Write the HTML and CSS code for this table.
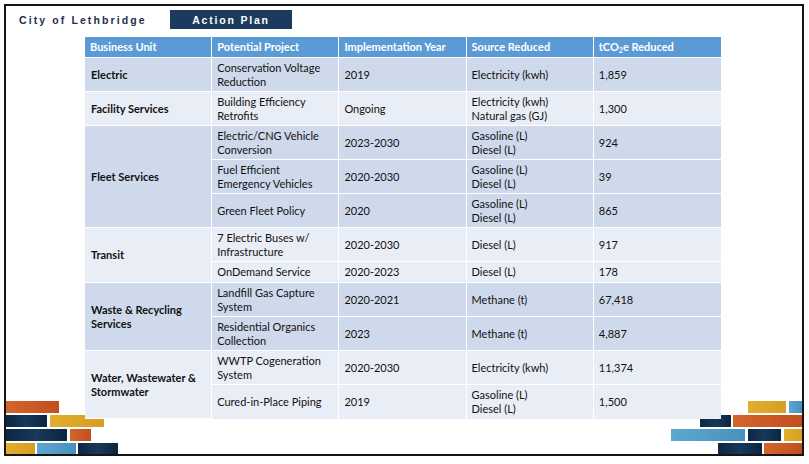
FILE: index.html
```html
<!DOCTYPE html>
<html lang="en">
<head>
<meta charset="utf-8">
<title>City of Lethbridge - Action Plan</title>
<link rel="stylesheet" href="styles.css">
</head>
<body>
<div class="slide">
  <svg class="deco deco-left" width="115" height="54" viewBox="0 0 115 54" aria-hidden="true">
    <defs>
      <linearGradient id="gO" x1="0" x2="1"><stop offset="0" stop-color="#d4652d"/><stop offset="1" stop-color="#c24f1d"/></linearGradient>
      <linearGradient id="gN" x1="0" x2="1"><stop offset="0" stop-color="#0d2741"/><stop offset="0.5" stop-color="#16395a"/><stop offset="1" stop-color="#0c2540"/></linearGradient>
      <linearGradient id="gY" x1="0" x2="1"><stop offset="0" stop-color="#e2ae2e"/><stop offset="1" stop-color="#d69e22"/></linearGradient>
      <linearGradient id="gB" x1="0" x2="1"><stop offset="0" stop-color="#5ea7cf"/><stop offset="1" stop-color="#4791bf"/></linearGradient>
    </defs>
    <rect x="0" y="1" width="53" height="12" fill="url(#gO)"/>
    <rect x="0" y="15" width="41" height="12" fill="url(#gN)"/>
    <rect x="44" y="15" width="54" height="12" fill="url(#gY)"/>
    <rect x="0" y="29" width="61" height="12" fill="url(#gN)"/>
    <rect x="64" y="29" width="21" height="12" fill="url(#gO)"/>
    <rect x="0" y="43" width="29" height="12" fill="url(#gY)"/>
    <rect x="31" y="43" width="39" height="12" fill="url(#gB)"/>
    <rect x="72" y="43" width="40" height="12" fill="url(#gN)"/>
  </svg>
  <svg class="deco deco-right" width="135" height="54" viewBox="0 0 135 54" aria-hidden="true">
    <defs>
      <linearGradient id="rO" x1="0" x2="1"><stop offset="0" stop-color="#d4652d"/><stop offset="1" stop-color="#c24f1d"/></linearGradient>
      <linearGradient id="rN" x1="0" x2="1"><stop offset="0" stop-color="#0d2741"/><stop offset="0.5" stop-color="#16395a"/><stop offset="1" stop-color="#0c2540"/></linearGradient>
      <linearGradient id="rY" x1="0" x2="1"><stop offset="0" stop-color="#e2ae2e"/><stop offset="1" stop-color="#d69e22"/></linearGradient>
      <linearGradient id="rB" x1="0" x2="1"><stop offset="0" stop-color="#5ea7cf"/><stop offset="1" stop-color="#4791bf"/></linearGradient>
    </defs>
    <rect x="81" y="1" width="38" height="12" fill="url(#rY)"/>
    <rect x="122" y="1" width="13" height="12" fill="url(#rB)"/>
    <rect x="33" y="15" width="31" height="12" fill="url(#rN)"/>
    <rect x="66" y="15" width="69" height="12" fill="url(#rO)"/>
    <rect x="4" y="29" width="74" height="12" fill="url(#rB)"/>
    <rect x="81" y="29" width="33" height="12" fill="url(#rN)"/>
    <rect x="117" y="29" width="18" height="12" fill="url(#rY)"/>
    <rect x="51" y="43" width="44" height="12" fill="url(#rN)"/>
    <rect x="97" y="43" width="38" height="12" fill="url(#rO)"/>
  </svg>

  <header class="topbar">
    <div class="brand">City of Lethbridge</div>
    <div class="tag">Action Plan</div>
  </header>

  <table class="plan">
    <thead>
      <tr class="head">
        <th>Business Unit</th>
        <th>Potential Project</th>
        <th>Implementation Year</th>
        <th>Source Reduced</th>
        <th>tCO<sub>2</sub>e Reduced</th>
      </tr>
    </thead>
    <tbody>
      <tr class="dark">
        <td class="unit">Electric</td>
        <td>Conservation Voltage<br>Reduction</td>
        <td>2019</td>
        <td>Electricity (kwh)</td>
        <td>1,859</td>
      </tr>
      <tr class="light">
        <td class="unit">Facility Services</td>
        <td>Building Efficiency<br>Retrofits</td>
        <td>Ongoing</td>
        <td>Electricity (kwh)<br>Natural gas (GJ)</td>
        <td>1,300</td>
      </tr>
      <tr class="dark">
        <td class="unit" rowspan="3">Fleet Services</td>
        <td>Electric/CNG Vehicle<br>Conversion</td>
        <td>2023-2030</td>
        <td>Gasoline (L)<br>Diesel (L)</td>
        <td>924</td>
      </tr>
      <tr class="dark">
        <td>Fuel Efficient<br>Emergency Vehicles</td>
        <td>2020-2030</td>
        <td>Gasoline (L)<br>Diesel (L)</td>
        <td>39</td>
      </tr>
      <tr class="dark">
        <td>Green Fleet Policy</td>
        <td>2020</td>
        <td>Gasoline (L)<br>Diesel (L)</td>
        <td>865</td>
      </tr>
      <tr class="light">
        <td class="unit" rowspan="2">Transit</td>
        <td>7 Electric Buses w/<br>Infrastructure</td>
        <td>2020-2030</td>
        <td>Diesel (L)</td>
        <td>917</td>
      </tr>
      <tr class="light short">
        <td>OnDemand Service</td>
        <td>2020-2023</td>
        <td>Diesel (L)</td>
        <td>178</td>
      </tr>
      <tr class="dark">
        <td class="unit" rowspan="2">Waste &amp; Recycling<br>Services</td>
        <td>Landfill Gas Capture<br>System</td>
        <td>2020-2021</td>
        <td>Methane (t)</td>
        <td>67,418</td>
      </tr>
      <tr class="dark">
        <td>Residential Organics<br>Collection</td>
        <td>2023</td>
        <td>Methane (t)</td>
        <td>4,887</td>
      </tr>
      <tr class="light">
        <td class="unit" rowspan="2">Water, Wastewater &amp;<br>Stormwater</td>
        <td>WWTP Cogeneration<br>System</td>
        <td>2020-2030</td>
        <td>Electricity (kwh)</td>
        <td>11,374</td>
      </tr>
      <tr class="light">
        <td>Cured-in-Place Piping</td>
        <td>2019</td>
        <td>Gasoline (L)<br>Diesel (L)</td>
        <td>1,500</td>
      </tr>
    </tbody>
  </table>
</div>
</body>
</html>
```

FILE: styles.css
```css
html, body {
  margin: 0;
  padding: 0;
  background: #ffffff;
}

body {
  padding: 4px 0 0 4px;
  font-family: Lato, "Open Sans", "Liberation Sans", sans-serif;
}

.slide {
  position: relative;
  width: 800px;
  height: 452px;
  box-sizing: border-box;
  border: 2px solid #151515;
  background: #ffffff;
  overflow: hidden;
}

.deco {
  position: absolute;
  bottom: 0;
  display: block;
  z-index: 0;
}

.deco-left { left: 0; }
.deco-right { right: 0; }

.topbar {
  display: flex;
  align-items: center;
  padding: 4px 0 0 13px;
  height: 19px;
}

.brand {
  width: 151px;
  font-family: "Liberation Sans", Arial, sans-serif;
  font-weight: 700;
  font-size: 10.5px;
  letter-spacing: 2.1px;
  color: #1c2f4d;
}

.tag {
  width: 122px;
  height: 19px;
  background: #1b3a5e;
  color: #ffffff;
  font-family: "Liberation Sans", Arial, sans-serif;
  font-weight: 700;
  font-size: 10.5px;
  letter-spacing: 1.8px;
  display: flex;
  align-items: center;
  justify-content: center;
}

.plan {
  position: relative;
  z-index: 1;
  margin: 8px 0 0 79px;
  width: 636px;
  border-collapse: separate;
  border-spacing: 0;
  table-layout: fixed;
  font-size: 11px;
  line-height: 14px;
  color: #111111;
}

.plan th,
.plan td {
  text-align: left;
  vertical-align: middle;
  padding: 0 4px 0 5px;
  border-right: 1px solid #ffffff;
  border-bottom: 1px solid #ffffff;
}

.plan th:last-child,
.plan td:last-child {
  border-right: none;
}

.plan .head th {
  background: #5b9bd5;
  color: #ffffff;
  font-weight: 700;
  height: 21px;
  box-sizing: border-box;
}

.plan sub {
  font-size: 7px;
  line-height: 0;
  vertical-align: -2px;
}

.plan tbody tr {
  height: 34px;
}

.plan tbody tr.short {
  height: 21px;
}

.plan tr.dark td { background: #cfd9ec; }
.plan tr.light td { background: #e9edf6; }

.plan td.unit {
  font-weight: 700;
  padding-left: 6px;
}

.plan tbody tr:last-child td {
  border-bottom: none;
}
```
